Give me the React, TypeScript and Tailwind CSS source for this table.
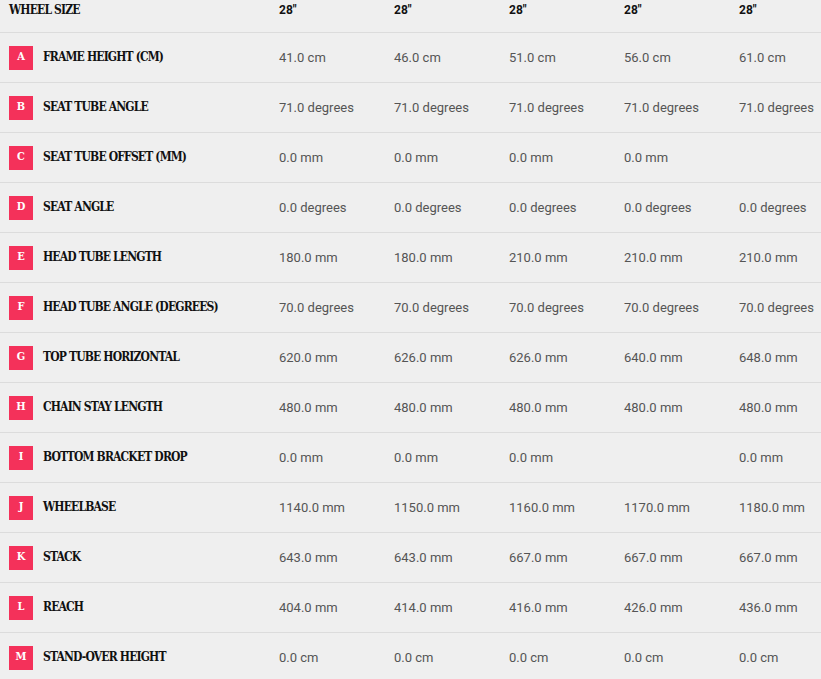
import React from 'react';

type Row = { key: string; label: string; values: string[] };

const rows: Row[] = [
  { key: 'A', label: 'FRAME HEIGHT (CM)', values: ['41.0 cm', '46.0 cm', '51.0 cm', '56.0 cm', '61.0 cm'] },
  { key: 'B', label: 'SEAT TUBE ANGLE', values: ['71.0 degrees', '71.0 degrees', '71.0 degrees', '71.0 degrees', '71.0 degrees'] },
  { key: 'C', label: 'SEAT TUBE OFFSET (MM)', values: ['0.0 mm', '0.0 mm', '0.0 mm', '0.0 mm', ''] },
  { key: 'D', label: 'SEAT ANGLE', values: ['0.0 degrees', '0.0 degrees', '0.0 degrees', '0.0 degrees', '0.0 degrees'] },
  { key: 'E', label: 'HEAD TUBE LENGTH', values: ['180.0 mm', '180.0 mm', '210.0 mm', '210.0 mm', '210.0 mm'] },
  { key: 'F', label: 'HEAD TUBE ANGLE (DEGREES)', values: ['70.0 degrees', '70.0 degrees', '70.0 degrees', '70.0 degrees', '70.0 degrees'] },
  { key: 'G', label: 'TOP TUBE HORIZONTAL', values: ['620.0 mm', '626.0 mm', '626.0 mm', '640.0 mm', '648.0 mm'] },
  { key: 'H', label: 'CHAIN STAY LENGTH', values: ['480.0 mm', '480.0 mm', '480.0 mm', '480.0 mm', '480.0 mm'] },
  { key: 'I', label: 'BOTTOM BRACKET DROP', values: ['0.0 mm', '0.0 mm', '0.0 mm', '', '0.0 mm'] },
  { key: 'J', label: 'WHEELBASE', values: ['1140.0 mm', '1150.0 mm', '1160.0 mm', '1170.0 mm', '1180.0 mm'] },
  { key: 'K', label: 'STACK', values: ['643.0 mm', '643.0 mm', '667.0 mm', '667.0 mm', '667.0 mm'] },
  { key: 'L', label: 'REACH', values: ['404.0 mm', '414.0 mm', '416.0 mm', '426.0 mm', '436.0 mm'] },
  { key: 'M', label: 'STAND-OVER HEIGHT', values: ['0.0 cm', '0.0 cm', '0.0 cm', '0.0 cm', '0.0 cm'] },
];

const slab = "font-['DejaVu_Serif','Liberation_Serif',serif] font-bold [font-stretch:condensed]";

export default function App() {
  return (
    <div className="min-h-screen bg-[#efefef] overflow-hidden font-['Roboto',sans-serif]">
      {/* header */}
      <div className="grid grid-cols-[279px_115px_115px_115px_115px_1fr] h-[33px] border-b border-[#dcdcdc] items-start pt-[2px]">
        <div className={`${slab} pl-[9px] text-[12px] leading-[16px] tracking-[-0.07em] text-[#111]`}>WHEEL SIZE</div>
        {[0, 1, 2, 3, 4].map((i) => (
          <div key={i} className="text-[12px] leading-[16px] font-bold text-[#111]">28"</div>
        ))}
      </div>

      {rows.map((row) => (
        <div
          key={row.key}
          className="grid grid-cols-[279px_115px_115px_115px_115px_1fr] h-[50px] border-b border-[#dcdcdc] items-center"
        >
          <div className="flex items-center pl-[9px] gap-[10px]">
            <div className={`${slab} w-[24px] h-[24px] bg-[#f4315a] text-white text-[11px] flex items-center justify-center`}>
              {row.key}
            </div>
            <span className={`${slab} text-[12px] tracking-[-0.07em] text-[#111] -mt-[1px]`}>{row.label}</span>
          </div>
          {row.values.map((v, i) => (
            <div key={i} className="text-[13px] text-[#555] whitespace-nowrap">{v}</div>
          ))}
        </div>
      ))}
    </div>
  );
}
